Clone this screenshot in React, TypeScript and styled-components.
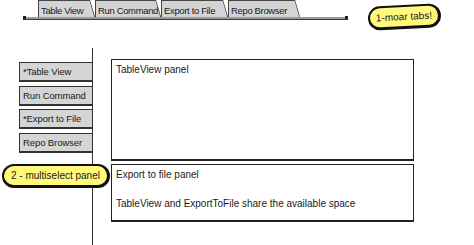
import styled, { createGlobalStyle } from "styled-components";

const GlobalStyle = createGlobalStyle`
  html, body {
    margin: 0;
    padding: 0;
    background: #fff;
  }
  body {
    font-family: "Liberation Sans", Arial, sans-serif;
    color: #1a1a1a;
    overflow: hidden;
  }
`;

const Page = styled.div`
  position: relative;
  width: 474px;
  height: 245px;
  display: flex;
  flex-direction: column;
  overflow: hidden;
`;

const TabStrip = styled.div`
  display: flex;
  padding-left: 23px;
`;

const TabBar = styled.div`
  display: flex;
  width: 310px;
  padding-left: 15px;
  border-bottom: 2px solid #9a9a9a;
  box-shadow: 0 1px 0 #3a3a3a;
  position: relative;

  &::before,
  &::after {
    content: "";
    position: absolute;
    bottom: -2px;
    width: 3px;
    height: 3px;
    background: #222;
  }
  &::before {
    left: 0;
  }
  &::after {
    right: 0;
  }
`;

const Tab = styled.div<{ $w: number }>`
  position: relative;
  width: ${(p) => p.$w}px;
  height: 17px;
  box-sizing: border-box;
  padding: 3px 0 0 2px;
  background: #d4d4d4;
  border-top: 1px solid #444;
  border-left: 1px solid #444;
  font-size: 9.5px;
  letter-spacing: -0.35px;
  line-height: 13px;
  white-space: nowrap;
  clip-path: polygon(0 0, calc(100% - 5px) 0, 100% 100%, 0 100%);

  &::after {
    content: "";
    position: absolute;
    top: 0;
    bottom: 0;
    right: 2px;
    width: 1.5px;
    background: #333;
    transform: skewX(16deg);
  }
`;

const Callout = styled.div<{ $x: number; $y: number; $w: number; $tilt: number }>`
  position: absolute;
  left: ${(p) => p.$x}px;
  top: ${(p) => p.$y}px;
  width: ${(p) => p.$w}px;
  height: 24px;
  box-sizing: border-box;
  display: flex;
  align-items: center;
  justify-content: center;
  background: #fff97c;
  border: 2px solid #111;
  border-bottom-width: 3px;
  border-right-width: 3px;
  border-radius: 12px;
  font-size: 10px;
  white-space: nowrap;
  transform: rotate(${(p) => p.$tilt}deg);
  z-index: 2;
`;

const Body = styled.div`
  flex: 1;
  display: flex;
  margin-top: 29px;
`;

const Sidebar = styled.div`
  width: 93px;
  box-sizing: border-box;
  padding: 14px 0 0 19px;
  border-right: 1.5px solid #333;
  display: flex;
  flex-direction: column;
  gap: 3.5px;
`;

const SideButton = styled.div`
  width: 74px;
  height: 20px;
  box-sizing: border-box;
  padding-left: 3px;
  display: flex;
  align-items: center;
  background: #d5d5d5;
  border: 1.5px solid #333;
  border-bottom-width: 2.5px;
  font-size: 9.5px;
  letter-spacing: -0.1px;
  white-space: nowrap;
  overflow: hidden;
`;

const Main = styled.div`
  padding: 11px 0 0 18px;
  display: flex;
  flex-direction: column;
  gap: 3px;
`;

const Panel = styled.div<{ $h: number }>`
  width: 303px;
  height: ${(p) => p.$h}px;
  box-sizing: border-box;
  padding: 3px 4px;
  border: 1.5px solid #222;
  border-bottom-width: 2px;
  font-size: 10px;
  line-height: 13px;
`;

const Note = styled.p`
  margin: 16px 0 0;
`;

export default function App() {
  return (
    <>
      <GlobalStyle />
      <Page>
        <TabStrip>
          <TabBar>
            <Tab $w={57}>Table View</Tab>
            <Tab $w={66}>Run Command</Tab>
            <Tab $w={67}>Export to File</Tab>
            <Tab $w={72}>Repo Browser</Tab>
          </TabBar>
        </TabStrip>

        <Body>
          <Sidebar>
            <SideButton>*Table View</SideButton>
            <SideButton>Run Command</SideButton>
            <SideButton>*Export to File</SideButton>
            <SideButton>Repo Browser</SideButton>
          </Sidebar>
          <Main>
            <Panel $h={102}>TableView panel</Panel>
            <Panel $h={58}>
              Export to file panel
              <Note>TableView and ExportToFile share the available space</Note>
            </Panel>
          </Main>
        </Body>

        <Callout $x={368} $y={5} $w={73} $tilt={-3}>
          1-moar tabs!
        </Callout>
        <Callout $x={2} $y={164} $w={108} $tilt={0}>
          2 - multiselect panel
        </Callout>
      </Page>
    </>
  );
}
